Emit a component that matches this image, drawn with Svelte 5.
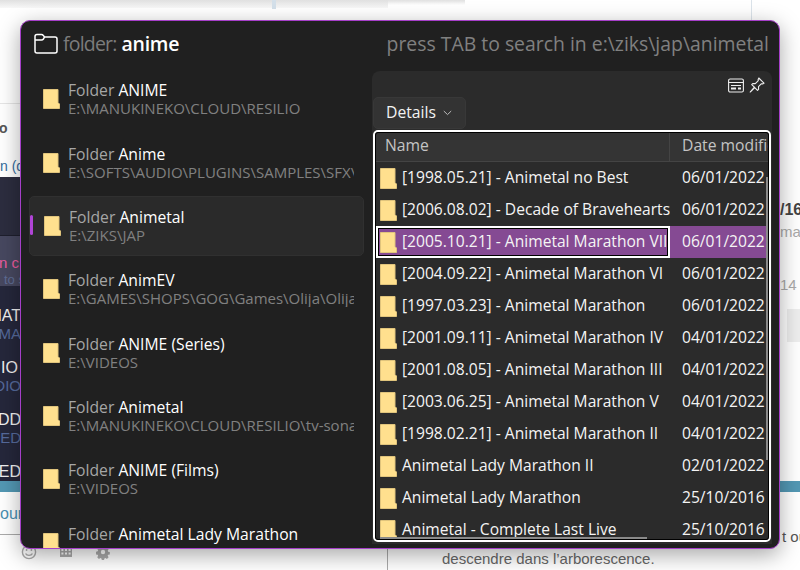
<script>
  const leftRows = [
    { name: 'ANIME', path: 'E:\\MANUKINEKO\\CLOUD\\RESILIO' },
    { name: 'Anime', path: 'E:\\SOFTS\\AUDIO\\PLUGINS\\SAMPLES\\SFX\\VST' },
    { name: 'Animetal', path: 'E:\\ZIKS\\JAP', active: true },
    { name: 'AnimEV', path: 'E:\\GAMES\\SHOPS\\GOG\\Games\\Olija\\Olija' },
    { name: 'ANIME (Series)', path: 'E:\\VIDEOS' },
    { name: 'Animetal', path: 'E:\\MANUKINEKO\\CLOUD\\RESILIO\\tv-sonar' },
    { name: 'ANIME (Films)', path: 'E:\\VIDEOS' },
    { name: 'Animetal Lady Marathon', path: '' }
  ];

  const files = [
    { name: '[1998.05.21] - Animetal no Best', date: '06/01/2022' },
    { name: '[2006.08.02] - Decade of Bravehearts', date: '06/01/2022' },
    { name: '[2005.10.21] - Animetal Marathon VII', date: '06/01/2022', selected: true },
    { name: '[2004.09.22] - Animetal Marathon VI', date: '06/01/2022' },
    { name: '[1997.03.23] - Animetal Marathon', date: '06/01/2022' },
    { name: '[2001.09.11] - Animetal Marathon IV', date: '04/01/2022' },
    { name: '[2001.08.05] - Animetal Marathon III', date: '04/01/2022' },
    { name: '[2003.06.25] - Animetal Marathon V', date: '04/01/2022' },
    { name: '[1998.02.21] - Animetal Marathon II', date: '04/01/2022' },
    { name: 'Animetal Lady Marathon II', date: '02/01/2022' },
    { name: 'Animetal Lady Marathon', date: '25/10/2016' },
    { name: 'Animetal - Complete Last Live', date: '25/10/2016' }
  ];
</script>

<div class="page">
  <div class="backdrop">
    <div class="side">
      <div class="top-shade"><span class="tick"></span></div>
      <div class="side-blank"></div>
      <div class="side-white">
        <b class="scrap-o">o</b>
        <span class="scrap-n">n (d</span>
      </div>
      <div class="navy">
        <div class="navy-top"></div>
        <div class="navy-hi">
          <span class="pink">n c</span>
          <span class="blue">to s</span>
        </div>
        <div class="navy-list">
          <div><span class="w">MAT</span><span class="b">IMA</span></div>
          <div><span class="w short">IO</span><span class="b">UDIO</span></div>
          <div><span class="w">DD</span><span class="b">ED</span></div>
          <div><span class="w">MED</span></div>
        </div>
      </div>
      <div class="teal"></div>
      <div class="side-foot"><span class="ou">oun</span></div>
      <div class="tools">
        <svg width="16" height="16" viewBox="0 0 16 16" fill="none" stroke="#aaa" stroke-width="1.4"><circle cx="8" cy="8" r="6.6"/><circle cx="5.6" cy="6" r=".9" fill="#aaa" stroke="none"/><circle cx="10.4" cy="6" r=".9" fill="#aaa" stroke="none"/><path d="M4.6 9.6c1 2.4 5.8 2.4 6.8 0"/></svg>
        <svg width="14" height="14" viewBox="0 0 14 14" fill="#aaa"><path d="M1 1h12v12H1zM2.4 5v2h2V5zm3.6 0v2h2V5zm3.6 0v2h2V5zM2.4 8.600v2h2v-2zm3.600 0v2h2v-2zm3.600 0v2h2v-2z" fill-rule="evenodd"/></svg>
        <svg width="16" height="16" viewBox="0 0 16 16" fill="#aaa"><path d="M6.600 1h2.800l.4 2 1.300.6 1.800-1 1.800 2-1.100 1.700.4 1.300 2 .5v2.700l-2 .4-.5 1.300 1.100 1.700-2 2-1.700-1.100-1.300.5-.4 1.900H6.600l-.4-1.900-1.300-.5-1.700 1.100-2-2 1.100-1.700-.5-1.300-2-.4V7.600l2-.5.500-1.300L1.200 4.100l1.800-2 1.800 1 1.300-.6z" transform="translate(1.200 1.200) scale(.85)"/><circle cx="8" cy="8" r="2.200" fill="#fff"/></svg>
      </div>
    </div>
    <div class="main">
      <div class="main-head">
        <div class="main-shade"></div>
        <div class="rule"></div>
      </div>
      <div class="main-right">
        <b class="r1">/16</b>
        <span class="r2">mar</span>
        <span class="r3">14</span>
        <span class="r4"></span>
      </div>
      <div class="teal"></div>
      <div class="main-foot">
        <span class="r5">t ou</span>
        <div class="note">descendre dans l’arborescence.</div>
      </div>
    </div>
  </div>

  <section class="launcher">
    <header class="head">
      <div class="query">
        <svg class="head-ico" width="24" height="22" viewBox="0 0 24 22" fill="none" stroke="#fff" stroke-width="1.500" stroke-linejoin="round"><path d="M1 18V3.500C1 2.300 1.800 1.500 3 1.500h4.500c.8 0 1.300.3 1.800.9l1.200 1.600H21c1.200 0 2 .8 2 2V18c0 1.200-.8 2-2 2H3c-1.200 0-2-.8-2-2z"/><path d="M1 7h6.500c1 0 1.500-.4 2-1l1-2"/></svg>
        <span class="dim">folder:</span> <strong>anime</strong>
      </div>
      <div class="hint">press TAB to search in e:\ziks\jap\animetal</div>
    </header>

    <div class="body">
      <ul class="results">
        {#each leftRows as row}
          <li class="result" class:active={row.active}>
            <svg class="yfolder" width="17" height="20" viewBox="0 0 17 20"><path d="M.5.500h14.500v13l1.500 1.500v4.500H.5z" fill="#ffe08e" stroke="#e0c47c"/></svg>
            <div class="result-text">
              <div class="result-name"><span class="dim2">Folder</span> {row.name}</div>
              <div class="result-path">{row.path}</div>
            </div>
          </li>
        {/each}
      </ul>

      <div class="preview">
        <div class="preview-tools">
          <svg width="16" height="15" viewBox="0 0 16 15" fill="none" stroke="#eee" stroke-width="1.100"><rect x=".6" y="1" width="14.800" height="13" rx="1.500"/><path d="M.6 4.500h14.800M3 7.500h10" /><path d="M3 10.500h5" stroke-width="2"/><path d="M10 10.500h3" stroke-width="2"/></svg>
          <svg width="16" height="16" viewBox="0 0 16 16" fill="none" stroke="#eee" stroke-width="1.100" stroke-linejoin="round"><path d="M9.800 1 15 6.200l-1.500.7-1-.2-3 3 .1 2.600-1.100 1L5.800 10.600 1.200 15 5.400 10.200 2.700 7.600l1-1.100 2.600.1 3-3-.2-1z"/></svg>
        </div>
        <div class="details-row">
          <button class="details"><span>Details</span>
            <svg width="9" height="6" viewBox="0 0 9 6" fill="none" stroke="#bbb" stroke-width="1"><path d="M.8 1 4.500 4.600 8.200 1"/></svg>
          </button>
        </div>
        <div class="table">
          <div class="thead">
            <div class="th name">Name</div>
            <div class="th date">Date modified</div>
          </div>
          <div class="tbody">
            {#each files as file}
              <div class="tr" class:selected={file.selected}>
                <div class="td name">
                  <svg class="yfolder" width="17" height="21" viewBox="0 0 17 21"><path d="M.5.500h14.500v14l1.500 1.500v4.500H.5z" fill="#ffe08e" stroke="#e0c47c"/></svg>
                  <span>{file.name}</span>
                </div>
                <div class="td date">{file.date}</div>
              </div>
            {/each}
          </div>
          <span class="vbar"></span>
          <span class="hbar"></span>
        </div>
      </div>
    </div>
  </section>
</div>

<style>
  :global(body) {
    margin: 0;
    background: #fff;
  }

  .page {
    position: relative;
    width: 800px;
    height: 570px;
    overflow: hidden;
    font-family: "Open Sans", "Noto Sans", sans-serif;
  }

  /* page behind the launcher */
  .backdrop {
    display: flex;
    height: 570px;
    font-family: "Liberation Sans", sans-serif;
  }

  .side {
    width: 388px;
    flex: none;
    display: flex;
    flex-direction: column;
    box-sizing: border-box;
  }

  .top-shade {
    height: 8px;
    background: linear-gradient(#e0e0e0, #f8f8f8);
    position: relative;
  }

  .tick {
    position: absolute;
    left: 272px;
    top: 0;
    width: 4px;
    height: 9px;
    background: #d4e0ea;
  }

  .side-blank {
    height: 95px;
    border-bottom: 1px solid #e6e6e6;
  }

  .side-white {
    height: 73px;
    padding-top: 16px;
    box-sizing: border-box;
    display: flex;
    flex-direction: column;
    gap: 22px;
    font-size: 14px;
    color: #555;
  }

  .scrap-o {
    margin-left: -1px;
  }

  .scrap-n {
    margin-left: 0;
    color: #356c9c;
  }

  .navy {
    height: 304px;
    background: #25273b;
    display: flex;
    flex-direction: column;
  }

  .navy-top {
    height: 58px;
    background: #2c2d3f;
    border-bottom: 1px solid #1e1f2d;
  }

  .navy-hi {
    height: 50px;
    background: #474860;
    display: flex;
    flex-direction: column;
    padding-top: 19px;
    box-sizing: border-box;
    gap: 3px;
    font-size: 13px;
  }

  .pink {
    color: #ea5c9f;
    font-size: 15px;
    line-height: 15px;
    margin-left: -1px;
  }

  .blue {
    color: #5f6c94;
    font-size: 13px;
    line-height: 13px;
    padding-left: 4px;
  }

  .navy-list {
    width: 21px;
    display: flex;
    flex-direction: column;
    gap: 16px;
    padding-top: 21px;
  }

  .navy-list div {
    display: flex;
    flex-direction: column;
    align-items: flex-end;
  }

  .w {
    color: #f0f0f0;
    font-size: 16px;
    line-height: 18px;
  }

  .w.short {
    margin-right: 3px;
  }

  .b {
    color: #566a9c;
    font-size: 15px;
    line-height: 18px;
  }

  .teal {
    height: 11px;
    background: #5398b4;
    flex: none;
  }

  .side-foot {
    height: 43px;
    padding-top: 13px;
    box-sizing: border-box;
    border-bottom: 1px solid #aaa;
    color: #4a90b2;
    font-size: 16px;
    overflow: hidden;
  }

  .tools {
    display: flex;
    gap: 22px;
    padding: 9px 0 0 21px;
    border-right: 1px solid #aaa;
    flex: 1;
    align-items: flex-start;
  }

  .main {
    flex: 1;
    display: flex;
    flex-direction: column;
    min-width: 0;
  }

  .main-head {
    display: flex;
    height: 22px;
    flex: none;
  }

  .main-shade {
    width: 77px;
    height: 5px;
    background: linear-gradient(#e0e0e0, #fff);
  }

  .rule {
    margin-left: 286px;
    width: 1px;
    background: #dbe3ea;
    height: 100%;
  }

  .main-right {
    height: 459px;
    display: flex;
    flex-direction: column;
    padding: 180px 0 0 392px;
    box-sizing: border-box;
    font-size: 15px;
  }

  .r1 {
    color: #444;
    font-size: 16px;
    line-height: 16px;
    margin-bottom: 6px;
  }

  .r2 {
    color: #aaa;
    line-height: 16px;
    margin-bottom: 37px;
  }

  .r3 {
    color: #aaa;
    line-height: 16px;
    margin-bottom: 16px;
  }

  .r4 {
    width: 13px;
    height: 33px;
    margin-left: 7px;
    background: #eee;
  }

  .main-foot {
    display: flex;
    flex-direction: column;
  }

  .r5 {
    margin-left: 394px;
    margin-top: 37px;
    font-size: 15px;
    color: #555;
    line-height: 16px;
    white-space: nowrap;
  }

  .note {
    margin-top: 5px;
    margin-left: 54px;
    font-size: 15px;
    line-height: 17px;
    color: #666;
  }

  /* launcher window */
  .launcher {
    position: absolute;
    left: 20px;
    top: 20px;
    width: 760px;
    height: 529px;
    box-sizing: border-box;
    background: #202020;
    border: 1px solid #a63fc9;
    border-radius: 10px;
    box-shadow: 0 6px 22px rgba(0, 0, 0, 0.35);
    overflow: hidden;
    color: #fff;
  }

  .head {
    height: 49px;
    display: flex;
    align-items: center;
    justify-content: space-between;
    padding: 0 10px 4px 13px;
    box-sizing: border-box;
    white-space: nowrap;
  }

  .query {
    display: flex;
    align-items: center;
    font-size: 19.5px;
    gap: 5px;
  }

  .dim {
    color: #7c7c7c;
    letter-spacing: -0.8px;
  }

  .query strong {
    font-weight: 600;
    letter-spacing: -0.3px;
  }

  .hint {
    font-size: 19.4px;
    color: #808080;
    font-weight: 500;
  }

  .body {
    display: flex;
    align-items: flex-start;
    height: 480px;
    position: relative;
  }

  .results {
    list-style: none;
    margin: -0.4px 0 0;
    padding: 0 0 0 8px;
    width: 335px;
    flex: none;
    display: flex;
    flex-direction: column;
    gap: 4px;
  }

  .result {
    height: 59.33px;
    flex: none;
    display: flex;
    align-items: center;
    gap: 8px;
    padding: 0 9px 0 13px;
    box-sizing: border-box;
    border: 1px solid transparent;
    border-radius: 5px;
    position: relative;
  }

  .result.active {
    background: #2a2a2a;
    border-color: #303030;
    padding-left: 14px;
  }

  .result.active::before {
    content: "";
    position: absolute;
    left: 0;
    top: 18px;
    width: 3px;
    height: 20px;
    border-radius: 2px;
    background: #b044d6;
  }

  .result-text {
    min-width: 0;
    flex: 1;
    overflow: hidden;
    white-space: nowrap;
  }

  .result-name {
    font-size: 15.7px;
    line-height: 18px;
  }

  .dim2 {
    color: #a6a6a6;
  }

  .result-path {
    font-size: 15px;
    line-height: 18px;
    min-height: 18px;
    color: #808080;
  }

  .yfolder {
    flex: none;
  }

  .preview {
    margin-left: 8px;
    margin-top: 1px;
    width: 400px;
    height: 473px;
    background: #2b2b2b;
    border-radius: 8px 8px 0 0;
    display: flex;
    flex-direction: column;
  }

  .preview-tools {
    height: 26px;
    display: flex;
    align-items: center;
    justify-content: flex-end;
    gap: 5px;
    padding: 2px 7px 0 0;
    box-sizing: border-box;
    flex: none;
  }

  .details-row {
    height: 33px;
    flex: none;
  }

  .details {
    margin-left: 1px;
    width: 93px;
    height: 32px;
    display: flex;
    align-items: center;
    gap: 7px;
    padding: 0 0 0 12px;
    background: #333;
    border: 1px solid #383838;
    border-radius: 5px;
    color: #f2f2f2;
    font: inherit;
    font-size: 15.7px;
  }

  .details span {
    padding-bottom: 3px;
  }

  .table {
    position: relative;
    margin-left: 1px;
    width: 398px;
    height: 412px;
    box-sizing: border-box;
    border: 2px solid #fff;
    border-radius: 5px;
    outline: 1px solid #000;
    outline-offset: -3px;
    padding: 1px;
    overflow: hidden;
    background: #2b2b2b;
    flex: none;
  }

  .thead {
    display: flex;
    height: 29px;
    background: #343434;
    border-bottom: 1px solid #444;
    box-sizing: border-box;
    color: #c4c4c4;
    font-size: 15.7px;
    white-space: nowrap;
  }

  .th {
    display: flex;
    align-items: center;
    padding-bottom: 5px;
    box-sizing: border-box;
  }

  .th.name {
    width: 294px;
    flex: none;
    padding-left: 9px;
    border-right: 1px solid #444;
  }

  .th.date {
    padding-left: 12px;
  }

  .tr {
    display: flex;
    height: 32px;
    font-size: 15.6px;
    color: #f4f4f4;
    white-space: nowrap;
  }

  .td {
    display: flex;
    align-items: center;
    box-sizing: border-box;
  }

  .td span {
    padding-bottom: 2px;
  }

  .td.name {
    width: 294px;
    flex: none;
    gap: 5px;
    padding-left: 4px;
    overflow: hidden;
  }

  .td.date {
    padding-left: 12px;
    padding-bottom: 2px;
  }

  .tr.selected {
    background: #854a93;
  }

  .tr.selected .td.name {
    border: 2px solid #fff;
    outline: 1px solid #000;
    outline-offset: -3px;
    padding-left: 2px;
  }

  .vbar {
    position: absolute;
    right: 1px;
    top: 45px;
    width: 2px;
    height: 283px;
    background: #8a8a8a;
  }

  .hbar {
    position: absolute;
    left: 5px;
    bottom: 1px;
    width: 267px;
    height: 2px;
    background: #8a8a8a;
  }
</style>
